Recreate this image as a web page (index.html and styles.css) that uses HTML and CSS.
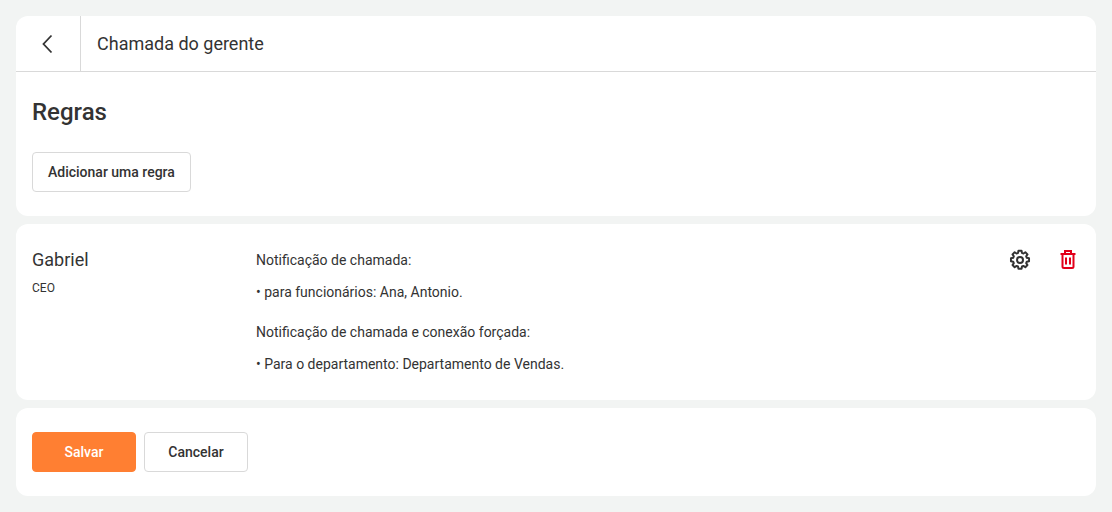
FILE: index.html
```html
<!DOCTYPE html>
<html lang="pt-BR">
<head>
    <meta charset="UTF-8">
    <meta name="viewport" content="width=device-width, initial-scale=1.0">
    <title>Chamada do gerente</title>
    <link rel="stylesheet" href="styles.css">
</head>
<body>
    <div class="container">
        <div class="card card-top">
            <div class="header">
                <a class="back" href="#">
                    <svg width="24" height="24" viewBox="0 0 24 24" fill="none" stroke="#333" stroke-width="1.8">
                        <path d="M15.5 3.5 L7.5 12 L15.5 20.5"/>
                    </svg>
                </a>
                <div class="header-title">Chamada do gerente</div>
            </div>
            <div class="rules">
                <h2>Regras</h2>
                <button class="btn">Adicionar uma regra</button>
            </div>
        </div>

        <div class="card rule">
            <div class="person">
                <div class="person-name">Gabriel</div>
                <div class="person-role">CEO</div>
            </div>
            <div class="details">
                <p>Notificação de chamada:</p>
                <p>• para funcionários: Ana, Antonio.</p>
                <p>Notificação de chamada e conexão forçada:</p>
                <p>• Para o departamento: Departamento de Vendas.</p>
            </div>
            <div class="actions">
                <svg width="24" height="24" viewBox="0 0 24 24" fill="none" stroke="#333" stroke-width="2">
                    <circle cx="12" cy="12" r="3"/>
                    <path stroke-width="2.3" stroke-linejoin="round" d="M10.2 3h3.6l.5 2.6 1.7.7 2.2-1.5 2.5 2.5-1.5 2.2.7 1.7 2.6.5v3.6l-2.6.5-.7 1.7 1.5 2.2-2.5 2.5-2.2-1.5-1.7.7-.5 2.6h-3.6l-.5-2.6-1.7-.7-2.2 1.5-2.5-2.5 1.5-2.2-.7-1.7-2.6-.5v-3.6l2.6-.5.7-1.7-1.5-2.2 2.5-2.5 2.2 1.5 1.7-.7z" transform="translate(12 12) scale(.86) translate(-12 -13.8)"/>
                </svg>
                <svg width="24" height="24" viewBox="0 0 24 24" fill="none" stroke="#e2001a" stroke-width="2">
                    <path d="M4.5 6h15"/>
                    <path d="M9 6V3h6v3"/>
                    <path d="M6.5 6v12.5A1.5 1.5 0 0 0 8 20h8a1.5 1.5 0 0 0 1.5-1.5V6"/>
                    <path d="M10 9.5v7M14 9.5v7"/>
                </svg>
            </div>
        </div>

        <div class="card footer">
            <button class="btn btn-save">Salvar</button>
            <button class="btn btn-cancel">Cancelar</button>
        </div>
    </div>
</body>
</html>
```

FILE: styles.css
```css
body {
    font-family: Roboto, Arial, sans-serif;
    margin: 0;
    padding: 0;
    background-color: #f2f4f3;
    color: #333;
}
.container {
    display: flex;
    flex-direction: column;
    gap: 8px;
    padding: 16px;
}
.card {
    background: white;
    border-radius: 12px;
}
.header {
    display: flex;
    height: 56px;
    box-sizing: border-box;
    border-bottom: 1px solid #d9d9d9;
}
.back {
    width: 64px;
    display: flex;
    align-items: center;
    justify-content: center;
    border-right: 1px solid #d9d9d9;
}
.back svg {
    display: block;
}
.header-title {
    padding-left: 16px;
    font-size: 18px;
    font-weight: 400;
    line-height: 56px;
}
.rules {
    padding: 24px 16px;
}
h2 {
    margin: 0 0 24px;
    font-size: 24px;
    font-weight: 500;
    line-height: 32px;
}
.btn {
    display: block;
    height: 40px;
    padding: 0 15px;
    background: white;
    color: #333;
    border: 1px solid #d9d9d9;
    border-radius: 4px;
    font-family: inherit;
    font-size: 14px;
    font-weight: 500;
    cursor: pointer;
}
.rule {
    display: flex;
    padding: 24px 16px;
}
.person {
    width: 224px;
    flex-shrink: 0;
}
.person-name {
    font-size: 18px;
    font-weight: 400;
    line-height: 24px;
}
.person-role {
    margin-top: 8px;
    font-size: 12px;
    line-height: 16px;
}
.details {
    flex: 1;
}
.details p {
    margin: 0 0 8px;
    font-size: 14px;
    line-height: 24px;
}
.details p:nth-child(2) {
    margin-bottom: 16px;
}
.details p:last-child {
    margin-bottom: 0;
}
.actions {
    display: flex;
    gap: 24px;
    height: 24px;
}
.footer {
    display: flex;
    gap: 8px;
    padding: 24px 16px;
}
.btn-save {
    width: 104px;
    background-color: #ff7f32;
    border-color: #ff7f32;
    color: white;
}
.btn-cancel {
    width: 104px;
}
.btn-save:hover {
    background-color: #f06f22;
}
```
